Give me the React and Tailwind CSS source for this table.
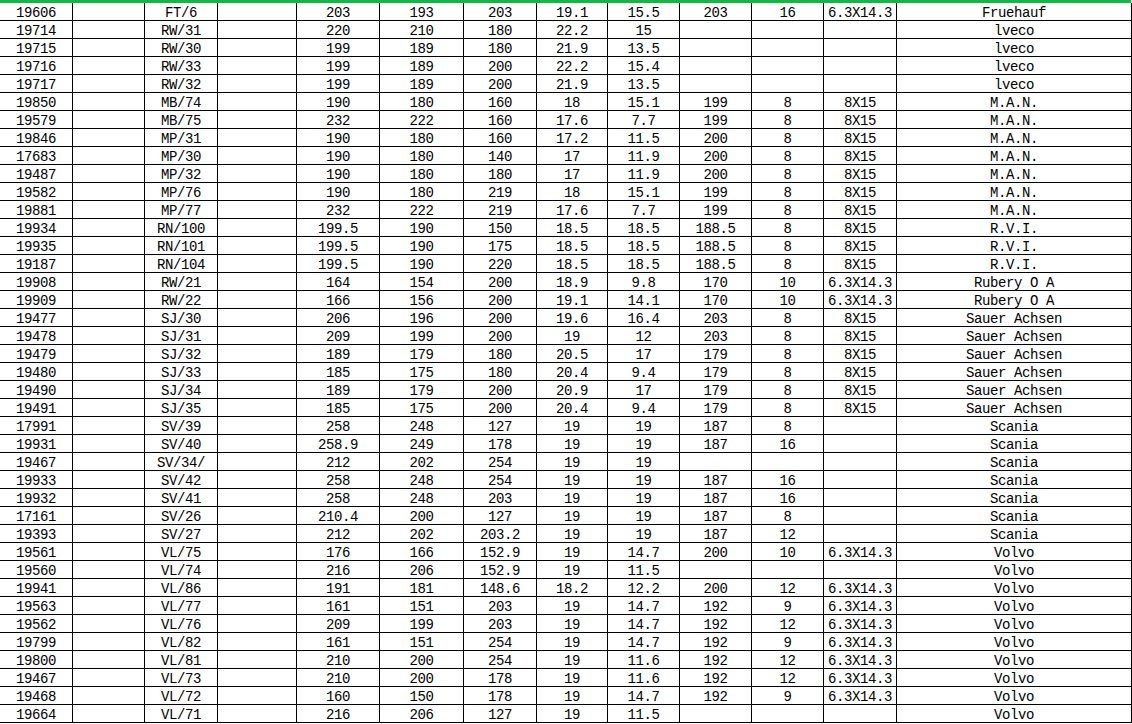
import React from 'react';

const rows = [
  ['19606', 'FT/6', '203', '193', '203', '19.1', '15.5', '203', '16', '6.3X14.3', 'Fruehauf'],
  ['19714', 'RW/31', '220', '210', '180', '22.2', '15', '', '', '', 'lveco'],
  ['19715', 'RW/30', '199', '189', '180', '21.9', '13.5', '', '', '', 'lveco'],
  ['19716', 'RW/33', '199', '189', '200', '22.2', '15.4', '', '', '', 'lveco'],
  ['19717', 'RW/32', '199', '189', '200', '21.9', '13.5', '', '', '', 'lveco'],
  ['19850', 'MB/74', '190', '180', '160', '18', '15.1', '199', '8', '8X15', 'M.A.N.'],
  ['19579', 'MB/75', '232', '222', '160', '17.6', '7.7', '199', '8', '8X15', 'M.A.N.'],
  ['19846', 'MP/31', '190', '180', '160', '17.2', '11.5', '200', '8', '8X15', 'M.A.N.'],
  ['17683', 'MP/30', '190', '180', '140', '17', '11.9', '200', '8', '8X15', 'M.A.N.'],
  ['19487', 'MP/32', '190', '180', '180', '17', '11.9', '200', '8', '8X15', 'M.A.N.'],
  ['19582', 'MP/76', '190', '180', '219', '18', '15.1', '199', '8', '8X15', 'M.A.N.'],
  ['19881', 'MP/77', '232', '222', '219', '17.6', '7.7', '199', '8', '8X15', 'M.A.N.'],
  ['19934', 'RN/100', '199.5', '190', '150', '18.5', '18.5', '188.5', '8', '8X15', 'R.V.I.'],
  ['19935', 'RN/101', '199.5', '190', '175', '18.5', '18.5', '188.5', '8', '8X15', 'R.V.I.'],
  ['19187', 'RN/104', '199.5', '190', '220', '18.5', '18.5', '188.5', '8', '8X15', 'R.V.I.'],
  ['19908', 'RW/21', '164', '154', '200', '18.9', '9.8', '170', '10', '6.3X14.3', 'Rubery O A'],
  ['19909', 'RW/22', '166', '156', '200', '19.1', '14.1', '170', '10', '6.3X14.3', 'Rubery O A'],
  ['19477', 'SJ/30', '206', '196', '200', '19.6', '16.4', '203', '8', '8X15', 'Sauer Achsen'],
  ['19478', 'SJ/31', '209', '199', '200', '19', '12', '203', '8', '8X15', 'Sauer Achsen'],
  ['19479', 'SJ/32', '189', '179', '180', '20.5', '17', '179', '8', '8X15', 'Sauer Achsen'],
  ['19480', 'SJ/33', '185', '175', '180', '20.4', '9.4', '179', '8', '8X15', 'Sauer Achsen'],
  ['19490', 'SJ/34', '189', '179', '200', '20.9', '17', '179', '8', '8X15', 'Sauer Achsen'],
  ['19491', 'SJ/35', '185', '175', '200', '20.4', '9.4', '179', '8', '8X15', 'Sauer Achsen'],
  ['17991', 'SV/39', '258', '248', '127', '19', '19', '187', '8', '', 'Scania'],
  ['19931', 'SV/40', '258.9', '249', '178', '19', '19', '187', '16', '', 'Scania'],
  ['19467', 'SV/34/', '212', '202', '254', '19', '19', '', '', '', 'Scania'],
  ['19933', 'SV/42', '258', '248', '254', '19', '19', '187', '16', '', 'Scania'],
  ['19932', 'SV/41', '258', '248', '203', '19', '19', '187', '16', '', 'Scania'],
  ['17161', 'SV/26', '210.4', '200', '127', '19', '19', '187', '8', '', 'Scania'],
  ['19393', 'SV/27', '212', '202', '203.2', '19', '19', '187', '12', '', 'Scania'],
  ['19561', 'VL/75', '176', '166', '152.9', '19', '14.7', '200', '10', '6.3X14.3', 'Volvo'],
  ['19560', 'VL/74', '216', '206', '152.9', '19', '11.5', '', '', '', 'Volvo'],
  ['19941', 'VL/86', '191', '181', '148.6', '18.2', '12.2', '200', '12', '6.3X14.3', 'Volvo'],
  ['19563', 'VL/77', '161', '151', '203', '19', '14.7', '192', '9', '6.3X14.3', 'Volvo'],
  ['19562', 'VL/76', '209', '199', '203', '19', '14.7', '192', '12', '6.3X14.3', 'Volvo'],
  ['19799', 'VL/82', '161', '151', '254', '19', '14.7', '192', '9', '6.3X14.3', 'Volvo'],
  ['19800', 'VL/81', '210', '200', '254', '19', '11.6', '192', '12', '6.3X14.3', 'Volvo'],
  ['19467', 'VL/73', '210', '200', '178', '19', '11.6', '192', '12', '6.3X14.3', 'Volvo'],
  ['19468', 'VL/72', '160', '150', '178', '19', '14.7', '192', '9', '6.3X14.3', 'Volvo'],
  ['19664', 'VL/71', '216', '206', '127', '19', '11.5', '', '', '', 'Volvo'],
];

// second and fourth columns of the sheet are empty
const toCells = (r) => [r[0], '', r[1], '', ...r.slice(2)];

export default function App() {
  return (
    <div className="w-[1132px] h-[724px] bg-white overflow-hidden text-black" style={{ fontFamily: '"Liberation Mono", "DejaVu Sans Mono", monospace' }}>
      <div className="h-[3px] w-[1131px] bg-[#20b04b]" />
      <div className="grid grid-cols-[73px_72px_73px_79px_83px_84px_73px_71px_72px_72px_72px_73px_235px] auto-rows-[18px]">
        {rows.map((r, i) =>
          toCells(r).map((c, j) => (
            <div
              key={i + '-' + j}
              className="border-r border-b border-black flex items-center justify-center text-[14px] tracking-[-0.4px] leading-[17px] whitespace-pre pt-[3px]"
            >
              {c}
            </div>
          ))
        )}
      </div>
    </div>
  );
}
